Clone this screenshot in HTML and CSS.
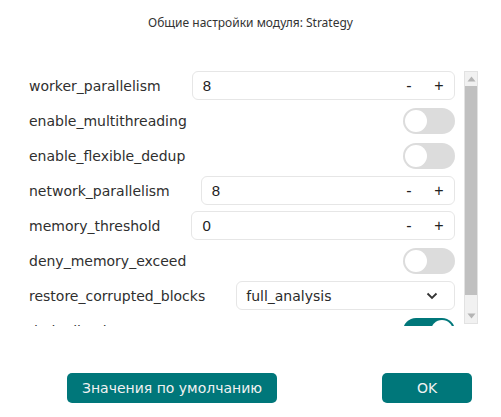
FILE: index.html
```html
<!DOCTYPE html>
<html>
<head>
<meta charset="utf-8">
<link rel="stylesheet" href="styles.css">
</head>
<body>
<div class="dialog">
  <div class="title">Общие настройки модуля: Strategy</div>
  <div class="body">
    <div class="list">
      <div class="row">
        <span class="label">worker_parallelism</span>
        <div class="spin"><span class="value">8</span><span class="btn">-</span><span class="btn">+</span></div>
      </div>
      <div class="row">
        <span class="label">enable_multithreading</span>
        <div class="toggle"><span class="knob"></span></div>
      </div>
      <div class="row">
        <span class="label">enable_flexible_dedup</span>
        <div class="toggle"><span class="knob"></span></div>
      </div>
      <div class="row">
        <span class="label">network_parallelism</span>
        <div class="spin"><span class="value">8</span><span class="btn">-</span><span class="btn">+</span></div>
      </div>
      <div class="row">
        <span class="label">memory_threshold</span>
        <div class="spin"><span class="value">0</span><span class="btn">-</span><span class="btn">+</span></div>
      </div>
      <div class="row">
        <span class="label">deny_memory_exceed</span>
        <div class="toggle"><span class="knob"></span></div>
      </div>
      <div class="row">
        <span class="label">restore_corrupted_blocks</span>
        <div class="select"><span class="sel-value">full_analysis</span>
          <svg class="chev" width="12" height="8" viewBox="0 0 12 8"><path d="M1.5 1.5 L6 6 L10.5 1.5" fill="none" stroke="#333" stroke-width="1.8"/></svg>
        </div>
      </div>
      <div class="row">
        <span class="label">deduplication</span>
        <div class="toggle on"><span class="knob"></span></div>
      </div>
    </div>
    <div class="scrollbar">
      <div class="arrow"><svg width="9" height="6" viewBox="0 0 9 6"><path d="M0.5 5.5 L4.5 0.5 L8.5 5.5 Z" fill="#b4b4b4"/></svg></div>
      <div class="track"><div class="thumb"></div></div>
      <div class="arrow"><svg width="9" height="6" viewBox="0 0 9 6"><path d="M0.5 0.5 L4.5 5.5 L8.5 0.5 Z" fill="#b4b4b4"/></svg></div>
    </div>
  </div>
  <div class="footer">
    <button class="pbtn wide">Значения по умолчанию</button>
    <button class="pbtn ok">OK</button>
  </div>
</div>
</body>
</html>
```
FILE: styles.css
```css
html, body {
  margin: 0;
  padding: 0;
  background: #ffffff;
}
.dialog {
  width: 501px;
  height: 417px;
  background: #ffffff;
  display: flex;
  flex-direction: column;
}
.title {
  padding-top: 15px;
  height: 16px;
  line-height: 16px;
  text-align: center;
  font-family: "Noto Sans", sans-serif;
  font-size: 12px;
  color: #333333;
}
.body {
  margin-top: 37px;
  padding-left: 29px;
  display: flex;
  align-items: flex-start;
}
.list {
  width: 426px;
  height: 258px;
  overflow: hidden;
}
.row {
  height: 35px;
  display: flex;
  align-items: center;
}
.label {
  font-family: "DejaVu Sans", sans-serif;
  font-size: 14px;
  color: #2f2f2f;
  white-space: nowrap;
}
.spin, .select {
  flex: 1;
  margin-left: 31px;
  height: 29px;
  box-sizing: border-box;
  border: 1.5px solid #e6e6e6;
  border-radius: 6px;
  display: flex;
  align-items: center;
  background: #fff;
}
.value {
  flex: 1;
  padding-left: 10px;
  font-family: "Liberation Sans", sans-serif;
  font-size: 15px;
  color: #222;
}
.btn {
  width: 30px;
  text-align: center;
  font-family: "Liberation Sans", sans-serif;
  font-size: 16px;
  color: #222;
}
.sel-value {
  flex: 1;
  padding-left: 9px;
  font-family: "DejaVu Sans", sans-serif;
  font-size: 14px;
  color: #2a2a2a;
}
.chev {
  margin-right: 16px;
}
.toggle {
  margin-left: auto;
  width: 52px;
  height: 26px;
  box-sizing: border-box;
  border-radius: 13px;
  background: #dcdcdc;
  padding: 2px;
  display: flex;
}
.knob {
  width: 22px;
  height: 22px;
  border-radius: 50%;
  background: #ffffff;
}
.toggle.on {
  background: #00777a;
  justify-content: flex-end;
}
.scrollbar {
  margin-left: 9px;
  margin-top: 3px;
  width: 14px;
  height: 253px;
  box-sizing: border-box;
  border: 1px solid #e2e2e2;
  background: #f1f1f1;
  display: flex;
  flex-direction: column;
}
.arrow {
  height: 14px;
  display: flex;
  align-items: center;
  justify-content: center;
}
.track {
  flex: 1;
  display: flex;
  flex-direction: column;
}
.thumb {
  height: 209px;
  background: #c0c0c0;
}
.footer {
  margin-top: 47px;
  padding: 0 29px 0 67px;
  display: flex;
  justify-content: space-between;
}
.pbtn {
  height: 30px;
  border: none;
  border-radius: 5px;
  background: #00777a;
  color: #f2f2f2;
  font-family: "DejaVu Sans", sans-serif;
  font-size: 14px;
  padding: 0;
}
.wide { width: 210px; }
.ok { width: 90px; }
```
